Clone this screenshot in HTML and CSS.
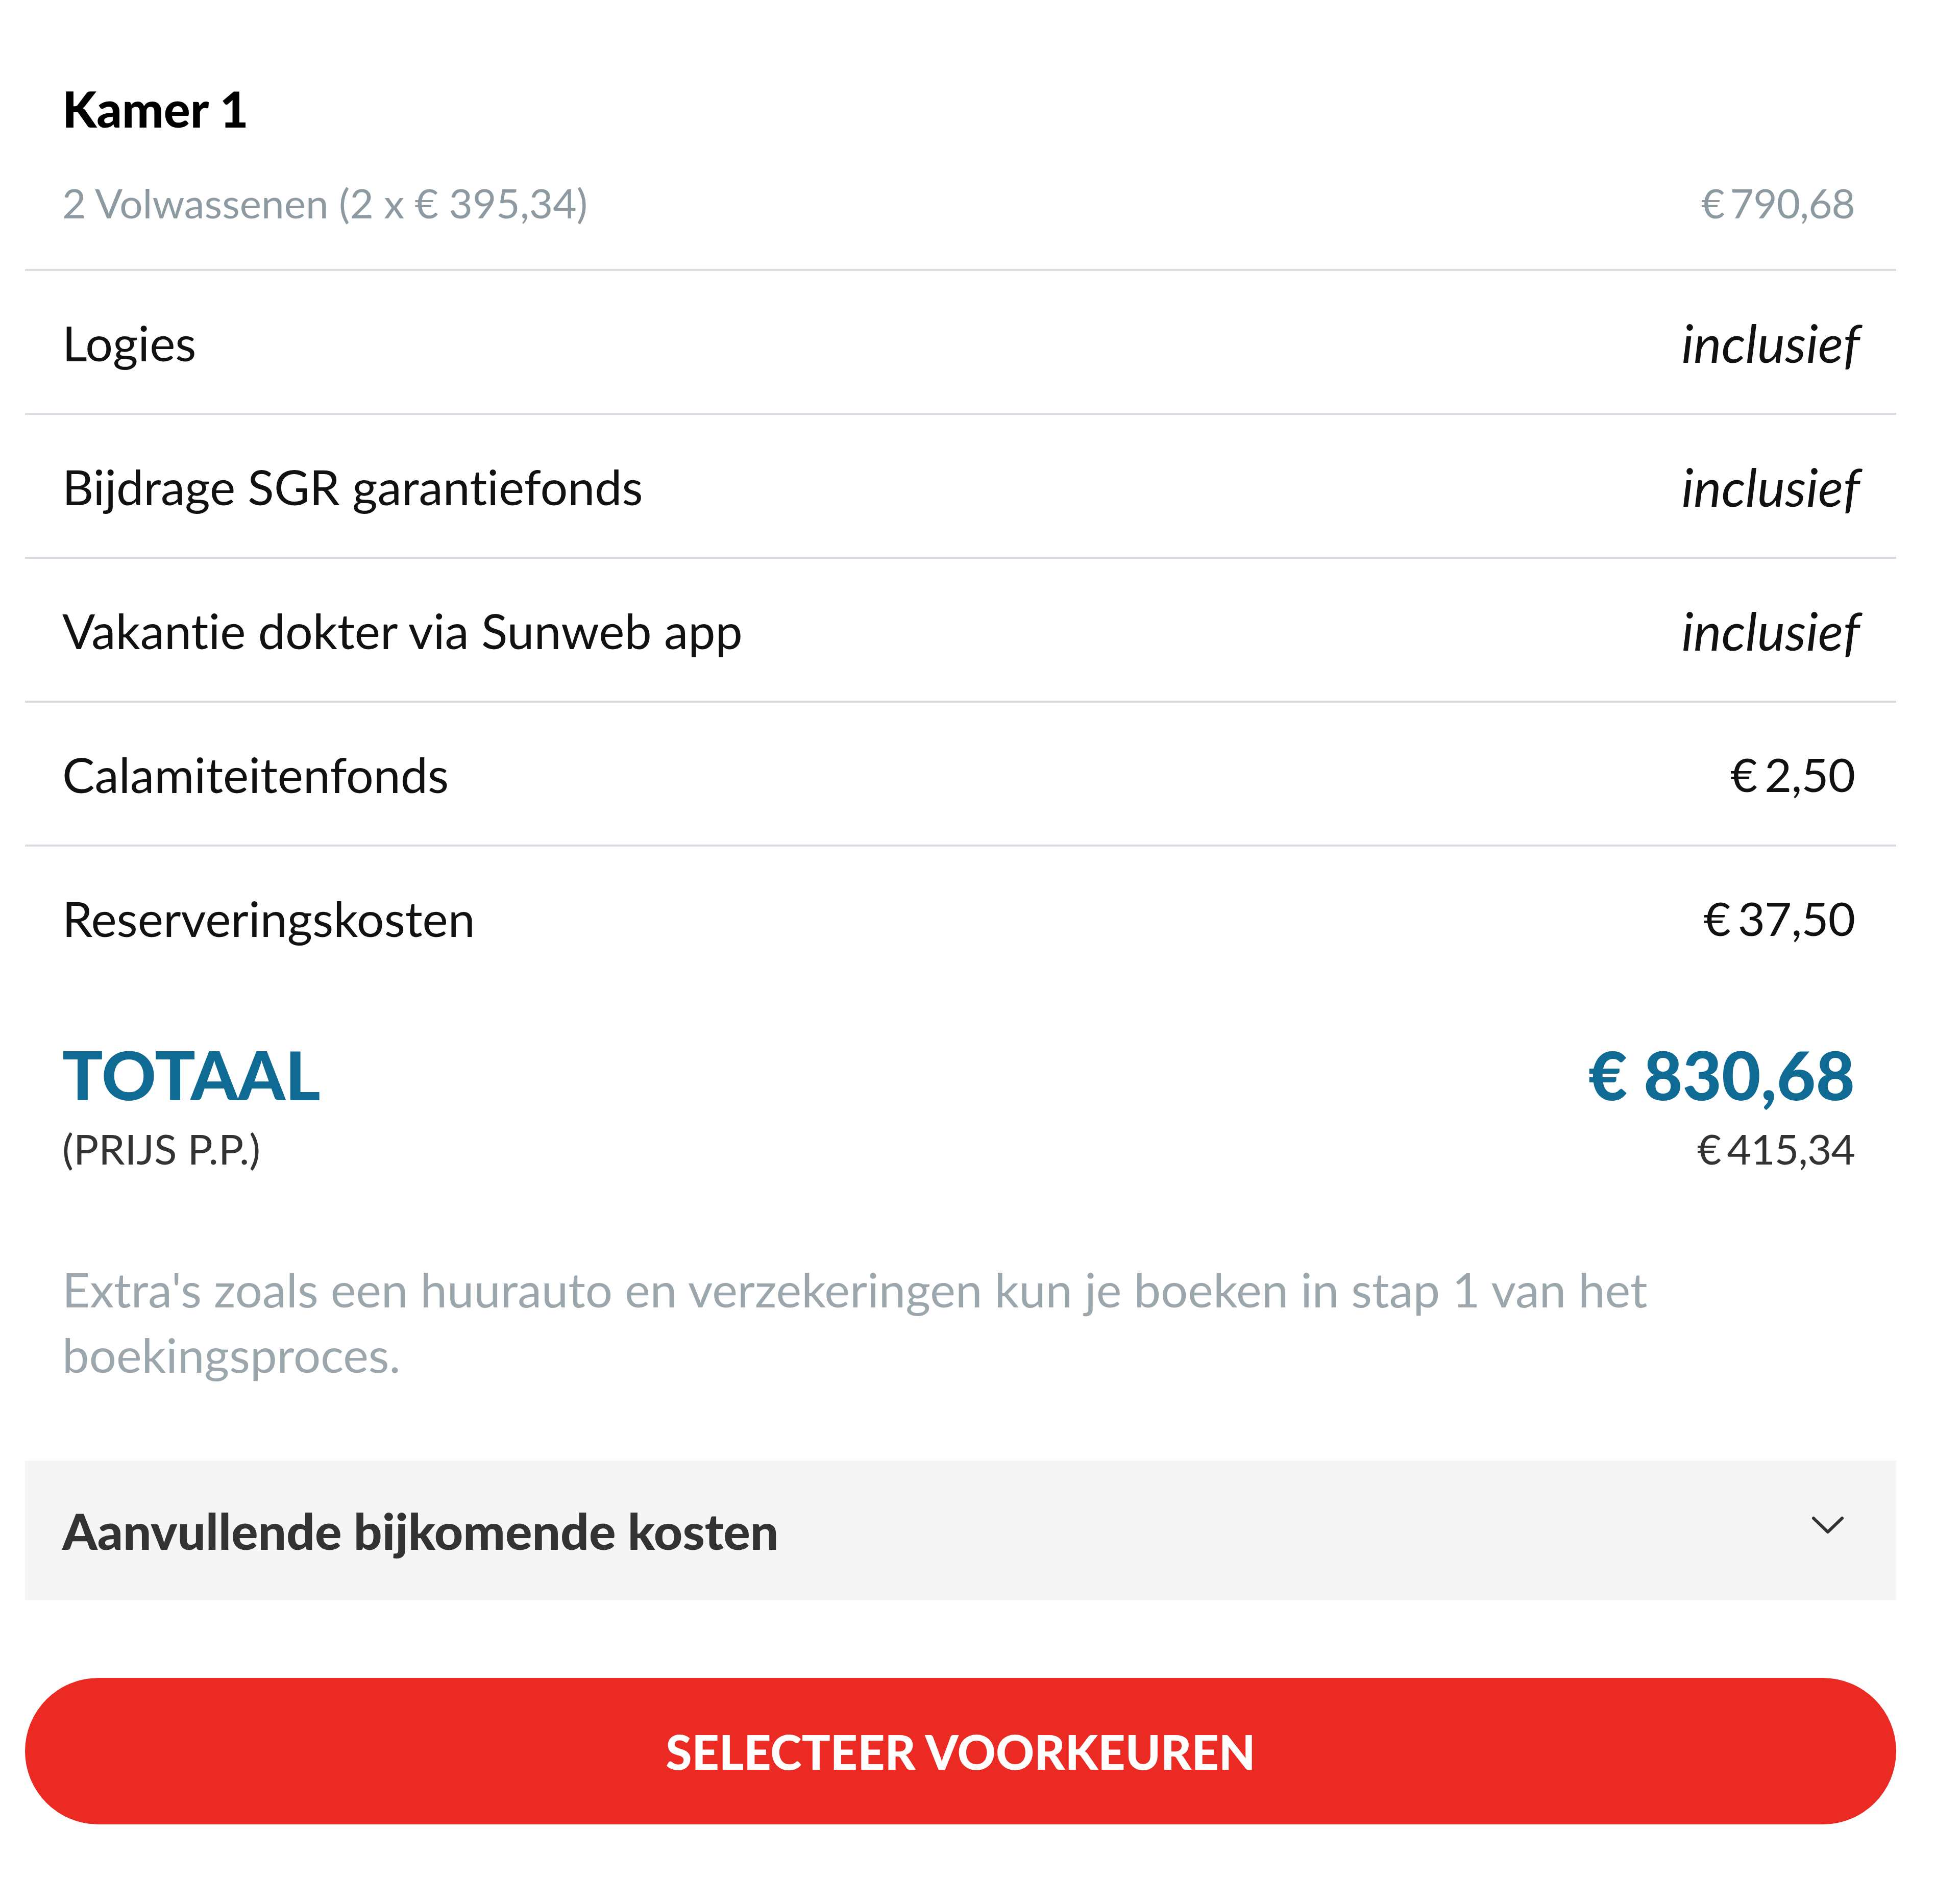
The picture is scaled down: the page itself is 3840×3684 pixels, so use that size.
FILE: index.html
```html
<!DOCTYPE html>
<html lang="nl">
<head>
<meta charset="utf-8">
<title>Prijsoverzicht</title>
<link rel="stylesheet" href="styles.css">
</head>
<body>
<div class="summary">
  <section class="room">
    <h2 class="room-title">Kamer 1</h2>
    <div class="room-line">
      <span>2 Volwassenen (2 x € 395,34)</span>
      <span class="amount">€ 790,68</span>
    </div>
  </section>
  <ul class="items">
    <li class="item"><span>Logies</span><em class="incl">inclusief</em></li>
    <li class="item"><span>Bijdrage SGR garantiefonds</span><em class="incl">inclusief</em></li>
    <li class="item"><span>Vakantie dokter via Sunweb app</span><em class="incl">inclusief</em></li>
    <li class="item"><span>Calamiteitenfonds</span><span class="amount">€ 2,50</span></li>
    <li class="item"><span>Reserveringskosten</span><span class="amount">€ 37,50</span></li>
  </ul>
  <section class="total">
    <div class="total-label">TOTAAL</div>
    <div class="total-amount">€ 830,68</div>
    <div class="total-sub">(PRIJS P.P.)</div>
    <div class="total-pp amount">€ 415,34</div>
  </section>
  <p class="note">Extra's zoals een huurauto en verzekeringen kun je boeken in stap 1 van het boekingsproces.</p>
  <div class="accordion">
    <span class="accordion-title">Aanvullende bijkomende kosten</span>
    <svg class="chevron" viewBox="0 0 64 36" width="64" height="36" aria-hidden="true">
      <polyline points="4,4 32,31 60,4" fill="none" stroke="#333" stroke-width="6" stroke-linecap="round" stroke-linejoin="round"/>
    </svg>
  </div>
  <button class="cta" type="button">SELECTEER VOORKEUREN</button>
</div>
</body>
</html>
```
FILE: styles.css
```css
* { box-sizing: border-box; }
html, body { margin: 0; padding: 0; background: #fff; }
body {
  font-family: "Lato", "Source Sans Pro", "Noto Sans", sans-serif;
  font-variant-ligatures: no-common-ligatures;
  font-feature-settings: "liga" 0, "clig" 0;
  color: #111;
  width: 3840px;
}
.summary {
  width: 3666px;
  margin-left: 49px;
  padding-top: 153px;
  padding-bottom: 113px;
}
.room { padding: 0 81px 70px 73px; }
.room-title {
  margin: 0;
  font-size: 97px;
  line-height: 120px;
  font-weight: 900;
  color: #000;
}
.room-line {
  margin-top: 64px;
  display: flex;
  justify-content: space-between;
  font-size: 80px;
  line-height: 120px;
  color: #8e9aa2;
}
.amount { word-spacing: -8px; letter-spacing: -1px; }
.items { list-style: none; margin: 0; padding: 0; }
.item {
  display: flex;
  justify-content: space-between;
  align-items: center;
  border-top: 4px solid #d7dde2;
  padding: 80px 81px 78px 73px;
  font-size: 95px;
  line-height: 120px;
  color: #111;
}
.item .amount { font-size: 92px; }
.incl { font-style: italic; font-size: 103px; margin-right: -10px; }
.total {
  margin-top: 93px;
  padding: 0 81px 0 73px;
  display: grid;
  grid-template-columns: 1fr auto;
  row-gap: 15px;
}
.total-label, .total-amount {
  font-size: 132px;
  line-height: 150px;
  font-weight: 900;
  color: #0f6a94;
}
.total-amount { text-align: right; }
.total-sub, .total-pp {
  font-size: 82px;
  line-height: 110px;
  color: #333;
}
.total-pp { text-align: right; }
.note {
  margin: 157px 0 0;
  padding: 0 81px 0 73px;
  font-size: 94px;
  line-height: 128px;
  color: #9ba6ad;
  max-width: 3400px;
}
.accordion {
  margin-top: 144px;
  height: 274px;
  background: #f5f5f5;
  display: flex;
  align-items: center;
  justify-content: space-between;
  padding: 0 102px 0 73px;
}
.accordion-title {
  font-size: 98px;
  font-weight: 900;
  color: #333;
}
.chevron { width: 64px; height: 36px; margin-top: -20px; }
.cta {
  display: block;
  width: 100%;
  margin-top: 152px;
  height: 287px;
  border: none;
  border-radius: 144px;
  background: #ec2a24;
  color: #fff;
  font-family: inherit;
  font-size: 93px;
  font-weight: 900;
  letter-spacing: 0;
}
```
